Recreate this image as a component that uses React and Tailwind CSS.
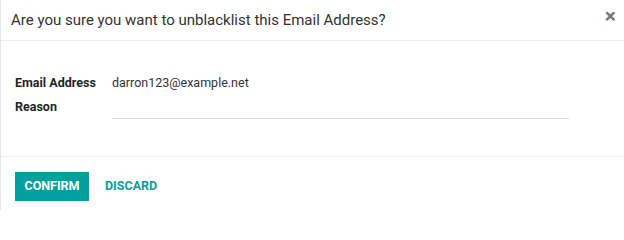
export default function App() {
  return (
    <div className="w-[624px] h-[210px] bg-white border-l border-[#e6e6e6] flex flex-col" style={{ fontFamily: "Roboto, 'Noto Sans', sans-serif" }}>
      <div className="h-[41px] flex items-center justify-between pl-[10px] pr-[8px] border-b border-[#eeeeee] shrink-0">
        <div className="text-[15px] text-[#333333] leading-none">Are you sure you want to unblacklist this Email Address?</div>
        <div className="text-[#777777] text-[21px] font-bold leading-none -mt-[8px]">×</div>
      </div>
      <div className="h-[116px] shrink-0 px-[14px] pt-[30px] border-b border-[#eeeeee]">
        <div className="flex items-center h-[24px]">
          <div className="w-[97px] text-[12.5px] font-bold text-[#212529]">Email Address</div>
          <div className="text-[12.5px] text-[#333333]">darron123@example.net</div>
        </div>
        <div className="flex items-start h-[24px]">
          <div className="w-[97px] text-[12.5px] font-bold text-[#212529] leading-[24px]">Reason</div>
          <div className="w-[457px] h-[24px] border-b border-[#dddddd]"></div>
        </div>
      </div>
      <div className="flex items-center gap-[2px] px-[14px] pt-[15px]">
        <button className="h-[29px] w-[74px] bg-[#00a09d] text-white text-[12.5px] font-bold flex items-center justify-center">CONFIRM</button>
        <button className="h-[29px] px-[14px] text-[#00a09d] text-[12.5px] font-bold">DISCARD</button>
      </div>
    </div>
  );
}
